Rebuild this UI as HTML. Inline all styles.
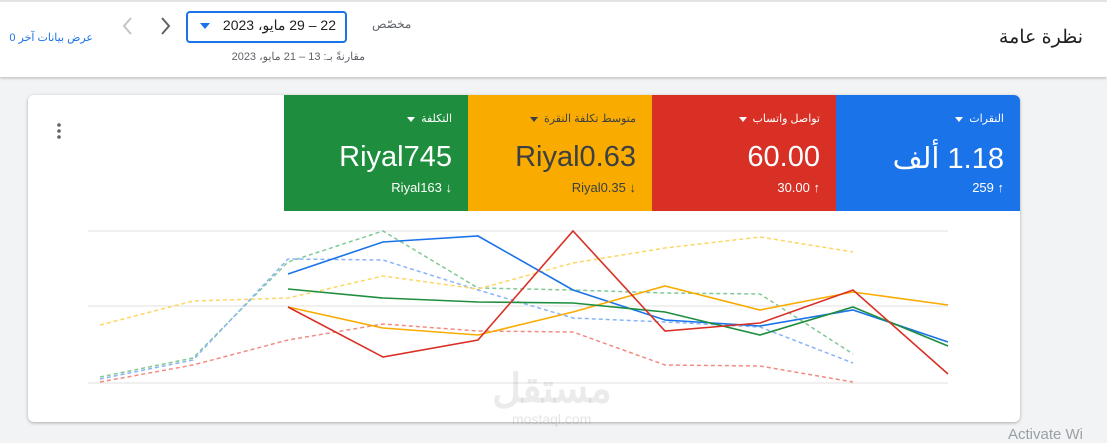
<html><head><style>
body{margin:0;width:1107px;height:439px;background:#f1f3f4;font-family:"Liberation Sans","Noto Sans CJK SC",sans-serif;position:relative;overflow:hidden}
.hdr{position:absolute;left:0;top:0;width:1107px;height:75px;background:#fff;border-top:2px solid #e3e3e3;box-shadow:0 1px 3px rgba(0,0,0,.25)}
.a{position:absolute;white-space:nowrap}
.r{direction:rtl}
.card{position:absolute;left:28px;top:95px;width:992px;height:327px;background:#fff;border-radius:6px;box-shadow:0 1px 3px rgba(0,0,0,.3)}
.t{position:absolute;top:95px;height:116px;width:184px;color:#fff;text-align:right;direction:rtl}
.t .l{position:absolute;right:16px;top:17px;font-size:11px}
.t .v{position:absolute;right:16px;top:46px;font-size:29px}
.t .s{position:absolute;right:16px;top:85px;font-size:13px}
.tri{display:inline-block;width:0;height:0;border-left:4px solid transparent;border-right:4px solid transparent;border-top:5px solid currentColor;margin-right:6px;vertical-align:middle}
</style></head><body>
<div class="hdr"></div>
<div class="a r" style="right:24px;top:26px;font-size:19px;color:#202124">نظرة عامة</div>
<div class="a" style="left:372px;top:17px;font-size:12px;color:#5f6368">مخصّص</div>
<div style="position:absolute;left:186px;top:11px;width:157px;height:28px;border:2px solid #1a73e8;border-radius:4px;background:#fff"></div>
<div class="a r" style="right:771px;top:17px;font-size:14px;color:#202124">22 – 29 مايو، 2023</div>
<div class="a" style="left:200px;top:23px;width:0;height:0;border-left:5px solid transparent;border-right:5px solid transparent;border-top:6px solid #1a73e8"></div>
<div class="a r" style="right:742px;top:50px;font-size:11px;color:#5f6368">مقارنةً بـ: 13 – 21 مايو، 2023</div>
<svg class="a" style="left:115px;top:14px" width="60" height="24" fill="none" stroke-width="2"><polyline points="16,4 9,12 16,20" stroke="#c4c7c5"/><polyline points="47,4 54,12 47,20" stroke="#5f6368"/></svg>
<div class="a r" style="right:1014px;top:31px;font-size:11px;color:#1a73e8">عرض بيانات آخر 0</div>
<div class="card"></div>
<svg class="a" style="left:55px;top:122px" width="8" height="20"><circle cx="4" cy="3" r="1.8" fill="#5f6368"/><circle cx="4" cy="9" r="1.8" fill="#5f6368"/><circle cx="4" cy="15" r="1.8" fill="#5f6368"/></svg>
<div class="t" style="left:836px;width:184px;background:#1a73e8;border-top-right-radius:6px"><div class="l">النقرات<span class="tri"></span></div><div class="v">1.18 ألف</div><div class="s"><span dir="ltr">259 ↑</span></div></div>
<div class="t" style="left:652px;background:#d93025"><div class="l">تواصل واتساب<span class="tri"></span></div><div class="v">60.00</div><div class="s"><span dir="ltr">30.00 ↑</span></div></div>
<div class="t" style="left:468px;background:#f9ab00;color:#3c4043"><div class="l">متوسط تكلفة النقرة<span class="tri"></span></div><div class="v"><span dir="ltr">Riyal0.63</span></div><div class="s"><span dir="ltr">Riyal0.35 ↓</span></div></div>
<div class="t" style="left:284px;background:#1e8e3e"><div class="l">التكلفة<span class="tri"></span></div><div class="v"><span dir="ltr">Riyal745</span></div><div class="s"><span dir="ltr">Riyal163 ↓</span></div></div>
<svg class="a" style="left:0;top:0" width="1107" height="439" fill="none" stroke-width="1.6">
<g stroke="#e0e0e0" stroke-width="1"><line x1="88" y1="231" x2="948" y2="231"/><line x1="88" y1="306" x2="948" y2="306"/><line x1="88" y1="383" x2="948" y2="383"/></g>
<g stroke-dasharray="4 3" stroke-width="1.5">
<polyline stroke="#81c995" points="100,377 193,358 288,262 383,231 478,288 573,290 665,293 760,294 853,354"/>
<polyline stroke="#8ab4f8" points="100,379 193,360 288,259 383,260 478,290 573,318 665,322 760,327 853,363"/>
<polyline stroke="#fdd663" points="100,325 193,301 288,298 383,276 478,289 573,263 665,248 760,237 853,252"/>
<polyline stroke="#f28b82" points="100,382 193,365 288,340 383,324 478,331 573,332 665,365 760,366 853,382"/>
</g>
<polyline stroke="#1a73e8" points="288,274 383,242 478,236 573,290 665,320 760,326 853,310 948,342"/>
<polyline stroke="#f9ab00" points="288,307 383,328 478,335 573,312 665,286 760,310 853,292 948,305"/>
<polyline stroke="#1e8e3e" points="288,289 383,298 478,302 573,303 665,312 760,335 853,307 948,346"/>
<polyline stroke="#d93025" points="288,307 383,357 478,340 573,231 665,331 760,323 853,290 948,374"/>
</svg>
<div class="a" style="left:492px;top:366px;font-size:40px;font-weight:bold;color:rgba(120,120,120,.15)">مستقل</div>
<div class="a" style="left:512px;top:411px;font-size:14px;color:rgba(120,120,120,.2)">mostaql.com</div>
<div class="a" style="left:1008px;top:426px;font-size:15px;color:#9aa0a6">Activate Wi</div>
</body></html>
